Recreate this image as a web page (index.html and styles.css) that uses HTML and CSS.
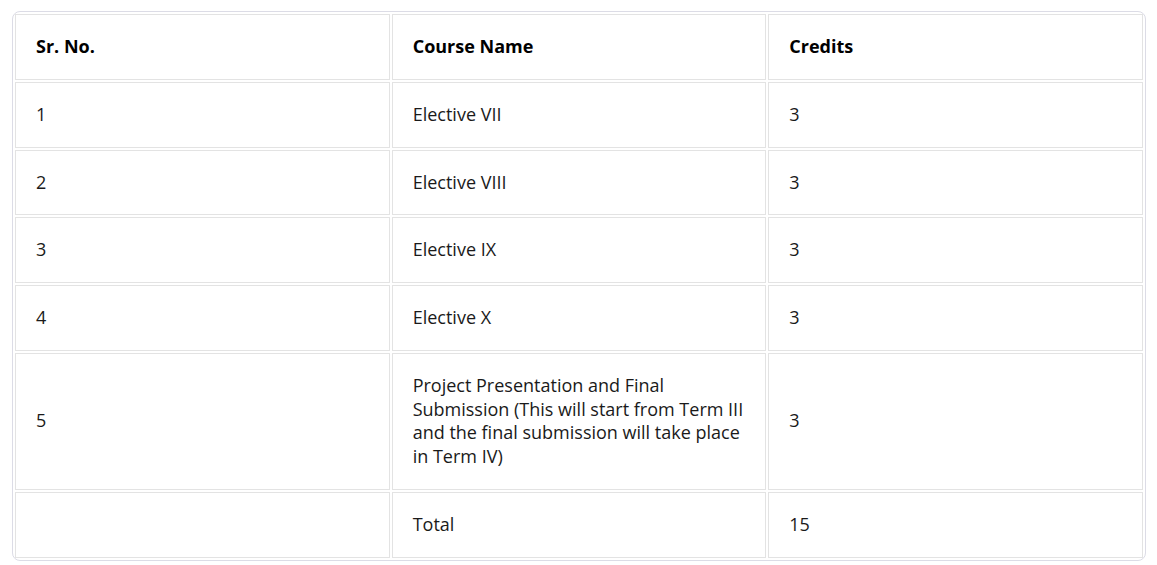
FILE: index.html
```html
<!DOCTYPE html>
<html lang="en">
<head>
<meta charset="utf-8">
<title>Courses</title>
<link rel="stylesheet" href="styles.css">
</head>
<body>
<div class="table-wrap">
  <table class="course-table">
    <thead>
      <tr><th>Sr. No.</th><th>Course Name</th><th>Credits</th></tr>
    </thead>
    <tbody>
      <tr><td>1</td><td>Elective VII</td><td>3</td></tr>
      <tr><td>2</td><td>Elective VIII</td><td>3</td></tr>
      <tr><td>3</td><td>Elective IX</td><td>3</td></tr>
      <tr><td>4</td><td>Elective X</td><td>3</td></tr>
      <tr><td>5</td><td>Project Presentation and Final Submission (This will start from Term III and the final submission will take place in Term IV)</td><td>3</td></tr>
      <tr><td></td><td>Total</td><td>15</td></tr>
    </tbody>
  </table>
</div>
</body>
</html>
```
FILE: styles.css
```css
html, body {
  margin: 0;
  padding: 0;
  background: #fff;
}
body {
  padding: 11px 11px 0 12px;
  font-family: "Open Sans", "Noto Sans", sans-serif;
  font-size: 18px;
  line-height: 23.75px;
  color: #1a1a1a;
}
.table-wrap {
  border: 1px solid #dcdce6;
  border-radius: 8px;
  overflow: hidden;
}
.course-table {
  width: 100%;
  table-layout: fixed;
  border-collapse: separate;
  border-spacing: 2px;
}
.course-table th,
.course-table td {
  border: 1px solid #e3e3e3;
  padding: 20px;
  text-align: left;
  vertical-align: middle;
}
.course-table th {
  font-weight: 700;
  color: #000;
}
```
